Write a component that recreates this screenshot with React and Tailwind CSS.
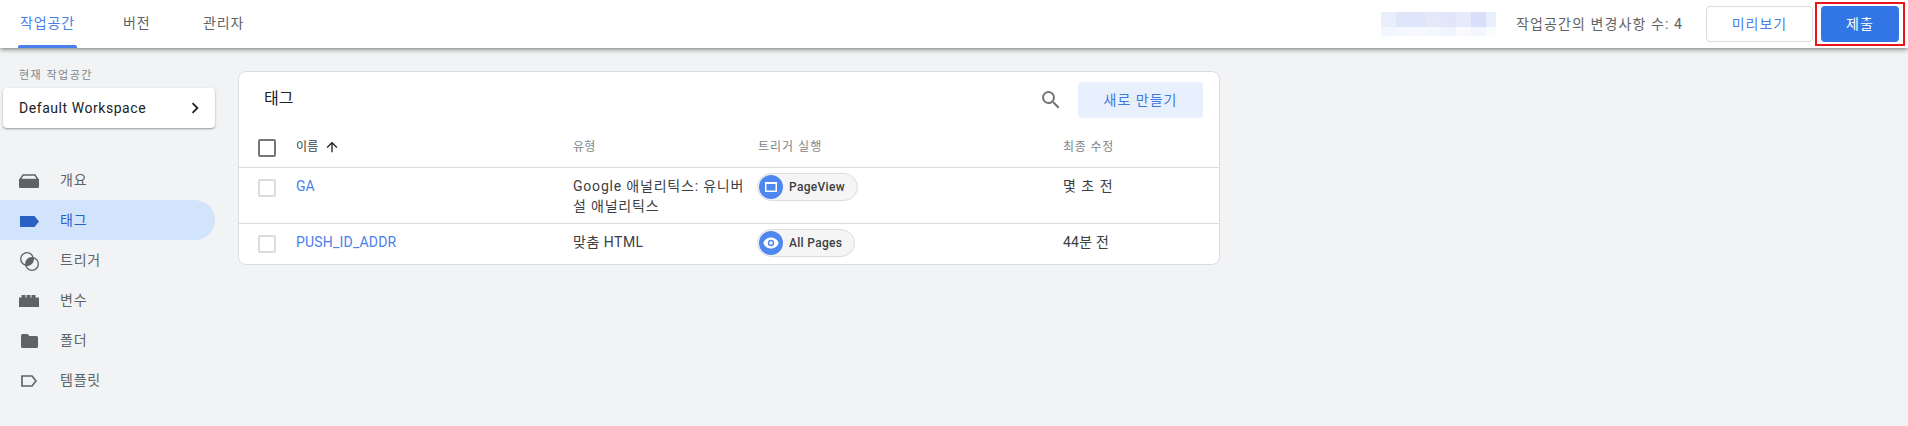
import React from 'react';

const font = "font-['Roboto','Noto_Sans_CJK_KR',sans-serif]";

// blurred account name in the top bar
const mosaicTop = ['#e9eefb', '#e0e6fa', '#dfe5fa', '#e4e9fa', '#e1e6fa', '#e6ebfb', '#d9dffa', '#e8f0fd'];
const mosaicBottom = ['#f2f6fe', '#f5f8fe', '#f7f9fe', '#f3f8fe', '#eff4fe', '#f9fafe', '#f3f6fe', '#fafbff'];

const NavIcon = ({ name, color }) => {
  if (name === 'overview') {
    return (
      <svg width="20" height="14" viewBox="0 0 20 14">
        <path d="M4 1h12l3 4.500H1z" fill="none" stroke={color} strokeWidth="1.500" />
        <path d="M0 5h20v8a1 1 0 0 1-1 1H1a1 1 0 0 1-1-1z" fill={color} />
      </svg>
    );
  }
  if (name === 'tag') {
    return (
      <svg width="19" height="11" viewBox="0 0 19 11">
        <path d="M0 0h14.500L19 5.500 14.500 11H0z" fill={color} />
      </svg>
    );
  }
  if (name === 'trigger') {
    return (
      <svg width="19" height="19" viewBox="0 0 19 19">
        <circle cx="7" cy="7" r="6.300" fill="none" stroke={color} strokeWidth="1.300" />
        <circle cx="12" cy="12" r="6.300" fill="none" stroke={color} strokeWidth="1.300" />
        <path d="M13.360 5.640A6.500 6.500 0 0 1 5.640 13.360 6.500 6.500 0 0 1 13.360 5.640z" fill={color} />
      </svg>
    );
  }
  if (name === 'variable') {
    return (
      <svg width="20" height="12" viewBox="0 0 20 12">
        <path d="M0 12V2.500h2.500V0h4v2.500h1V0h4v2.500h1V0h4v2.500H20V12z" fill={color} />
      </svg>
    );
  }
  if (name === 'folder') {
    return (
      <svg width="17" height="14" viewBox="0 0 17 14">
        <path d="M1.500 0h5l2 2h7A1.500 1.500 0 0 1 17 3.500v9a1.500 1.500 0 0 1-1.500 1.500h-14A1.500 1.500 0 0 1 0 12.500v-11A1.500 1.500 0 0 1 1.500 0z" fill={color} />
      </svg>
    );
  }
  return (
    <svg width="16" height="12" viewBox="0 0 16 12">
      <path d="M1 1h10l4 5-4 5H1z" fill="none" stroke={color} strokeWidth="1.700" />
    </svg>
  );
};

const navItems = [
  { icon: 'overview', label: '개요' },
  { icon: 'tag', label: '태그', active: true },
  { icon: 'trigger', label: '트리거' },
  { icon: 'variable', label: '변수' },
  { icon: 'folder', label: '폴더' },
  { icon: 'template', label: '템플릿' },
];

const Chip = ({ label, icon }) => (
  <div className="inline-flex items-center h-7 -ml-px rounded-full border border-[#dadce0] bg-[#f5f5f5] pl-px pr-[12px] gap-[6px]">
    <span className="w-6 h-6 rounded-full bg-[#4f87f0] flex items-center justify-center">{icon}</span>
    <span className="text-[12px] font-medium tracking-[0.3px] text-[#3c4043]">{label}</span>
  </div>
);

const PageViewIcon = (
  <svg width="12" height="10" viewBox="0 0 12 10">
    <rect x="0" y="0" width="12" height="10" fill="#fff" />
    <rect x="1.500" y="2" width="9" height="6.500" fill="#4f87f0" />
  </svg>
);

const EyeIcon = (
  <svg width="16" height="12" viewBox="0 0 16 12">
    <path d="M8 .5C4.500.5 1.500 2.700.3 6c1.200 3.300 4.200 5.500 7.700 5.500s6.500-2.200 7.700-5.500C14.500 2.700 11.500.5 8 .5z" fill="#fff" />
    <circle cx="8" cy="6" r="3.200" fill="#4f87f0" />
    <circle cx="8" cy="6" r="1.800" fill="#fff" />
  </svg>
);

const Checkbox = ({ dark }) => (
  <div className={dark ? 'w-[18px] h-[18px] rounded-[2px] border-2 border-[#757575] bg-white' : 'w-[18px] h-[18px] rounded-[2px] border-2 border-[#dcdcdc] bg-white'} />
);

export default function App() {
  return (
    <div className={`${font} h-screen flex flex-col bg-[#f1f3f4] overflow-hidden`}>
      {/* top bar */}
      <header className="h-[48px] shrink-0 bg-white flex items-stretch justify-between shadow-[0_1px_5px_rgba(0,0,0,0.55)] z-10">
        <nav className="flex pl-[18px] text-[14px] tracking-[0.9px] gap-[46px]">
          <div className="relative flex items-center w-[59px] justify-center text-[#4a80ec] pb-[1px]">
            작업공간
            <div className="absolute bottom-0 left-0 right-0 h-[3px] rounded-t-[2px] bg-[#4a80ec]" />
          </div>
          <div className="flex items-center text-[#5f6368] pb-[1px] w-[34px]">버전</div>
          <div className="flex items-center text-[#5f6368] pb-[1px]">관리자</div>
        </nav>
        <div className="flex items-center">
          <div className="w-[115px] h-[24px] flex flex-col mr-[20px]">
            <div className="flex h-[15px]">
              {mosaicTop.map((c, i) => <div key={i} className="w-[15px] last:w-[10px]" style={{ backgroundColor: c }} />)}
            </div>
            <div className="flex h-[9px]">
              {mosaicBottom.map((c, i) => <div key={i} className="w-[15px] last:w-[10px]" style={{ backgroundColor: c }} />)}
            </div>
          </div>
          <span className="w-[165px] whitespace-nowrap text-[14px] text-[#5f6368] tracking-[1.1px] mr-[25px]">작업공간의 변경사항 수: 4</span>
          <button className="w-[107px] h-[36px] rounded-[4px] border border-[#dadce0] bg-white text-[14px] tracking-[1px] text-[#4a80ec] mr-[2px]">미리보기</button>
          <div className="border-2 border-[#e8141c] h-[44px] w-[90px] flex items-center justify-center mr-[3px]">
            <button className="w-[78px] h-[36px] rounded-[4px] bg-[#3275e4] text-[14px] tracking-[1px] text-white">제출</button>
          </div>
        </div>
      </header>

      <div className="flex flex-1 min-h-0">
        {/* sidebar */}
        <aside className="w-[238px] shrink-0">
          <div className="pl-[19px] pt-[21px] text-[11px] leading-[13px] tracking-[1.500px] text-[#80868b]">현재 작업공간</div>
          <div className="ml-[3px] mt-[6px] w-[212px] h-[40px] rounded-[4px] bg-white shadow-[0_1px_2px_rgba(60,64,67,0.5)] flex items-center justify-between pl-[16px] pr-[9px]">
            <span className="text-[14px] text-[#202124] tracking-[0.55px]">Default Workspace</span>
            <svg width="22" height="22" viewBox="0 0 24 24" fill="#202124">
              <path d="M10 6 8.590 7.410 13.170 12l-4.580 4.590L10 18l6-6z" />
            </svg>
          </div>
          <ul className="mt-[32px]">
            {navItems.map((item) => (
              <li
                key={item.label}
                className={item.active
                  ? 'h-[40px] w-[215px] flex items-center rounded-r-full bg-[#d2e3fc] text-[#2a5fc4]'
                  : 'h-[40px] w-[215px] flex items-center text-[#5f6368]'}
              >
                <span className="ml-[19px] mr-[21px] w-[20px] pt-[2px] flex items-center justify-center">
                  <NavIcon name={item.icon} color={item.active ? '#2a5fc4' : '#5f6368'} />
                </span>
                <span className="text-[14px] tracking-[0.8px]">{item.label}</span>
              </li>
            ))}
          </ul>
        </aside>

        {/* tags card */}
        <main className="pt-[23px]">
          <section className="w-[982px] rounded-[8px] border border-[#dadce0] bg-white">
            <div className="h-[61px] flex items-start justify-between pl-[25px] pr-[16px]">
              <h1 className="text-[16px] font-normal text-[#202124] mt-[15px]">태그</h1>
              <div className="flex items-center mt-[10px]">
                <svg width="24" height="24" viewBox="0 0 24 24" fill="#757575" className="mr-[15px]">
                  <path d="M15.500 14h-.790l-.280-.270A6.470 6.470 0 0 0 16 9.500 6.500 6.500 0 1 0 9.500 16c1.610 0 3.090-.590 4.230-1.570l.270.280v.790l5 4.990L20.490 19l-4.990-5zm-6 0C7.010 14 5 11.990 5 9.500S7.010 5 9.500 5 14 7.010 14 9.500 11.990 14 9.500 14z" />
                </svg>
                <button className="w-[125px] h-[36px] rounded-[4px] bg-[#e8f0fe] text-[14px] tracking-[1px] text-[#3f78e0]">새로 만들기</button>
              </div>
            </div>
            <div className="grid grid-cols-[57px_277px_185px_305px_1fr] text-[14px] leading-[20px] text-[#3c4043]">
              <div className="h-[35px] pl-[19px] pt-[6px] border-b border-[#dadce0]"><Checkbox dark /></div>
              <div className="h-[35px] pt-[5px] border-b border-[#dadce0] text-[12px] leading-[18px] tracking-[0.2px] text-[#3c4043] flex items-start gap-[6px]">
                이름
                <svg width="16" height="16" viewBox="0 0 24 24" fill="#202124" className="mt-px">
                  <path d="M4 12l1.410 1.410L11 7.830V20h2V7.830l5.580 5.590L20 12l-8-8-8 8z" />
                </svg>
              </div>
              <div className="h-[35px] pt-[5px] border-b border-[#dadce0] text-[12px] leading-[18px] tracking-[0.3px] text-[#80868b]">유형</div>
              <div className="h-[35px] pt-[5px] border-b border-[#dadce0] text-[12px] leading-[18px] tracking-[1px] text-[#80868b]">트리거 실행</div>
              <div className="h-[35px] pt-[5px] border-b border-[#dadce0] text-[12px] leading-[18px] tracking-[0.8px] text-[#80868b]">최종 수정</div>

              <div className="h-[56px] pl-[19px] pt-[11px] border-b border-[#dadce0]"><Checkbox /></div>
              <div className="h-[56px] pt-[8px] border-b border-[#dadce0] text-[#4a80ec]">GA</div>
              <div className="h-[56px] pt-[8px] pr-[10px] border-b border-[#dadce0] tracking-[0.8px]">Google 애널리틱스: 유니버설 애널리틱스</div>
              <div className="h-[56px] pt-[5px] border-b border-[#dadce0]"><Chip label="PageView" icon={PageViewIcon} /></div>
              <div className="h-[56px] pt-[8px] border-b border-[#dadce0] tracking-[1px]">몇 초 전</div>

              <div className="h-[40px] pl-[19px] pt-[11px]"><Checkbox /></div>
              <div className="h-[40px] pt-[8px] text-[#4a80ec] tracking-[0.2px]">PUSH_ID_ADDR</div>
              <div className="h-[40px] pt-[8px] tracking-[0.5px]">맞춤 HTML</div>
              <div className="h-[40px] pt-[5px]"><Chip label="All Pages" icon={EyeIcon} /></div>
              <div className="h-[40px] pt-[8px] tracking-[0.2px]">44분 전</div>
            </div>
          </section>
        </main>
      </div>
    </div>
  );
}
